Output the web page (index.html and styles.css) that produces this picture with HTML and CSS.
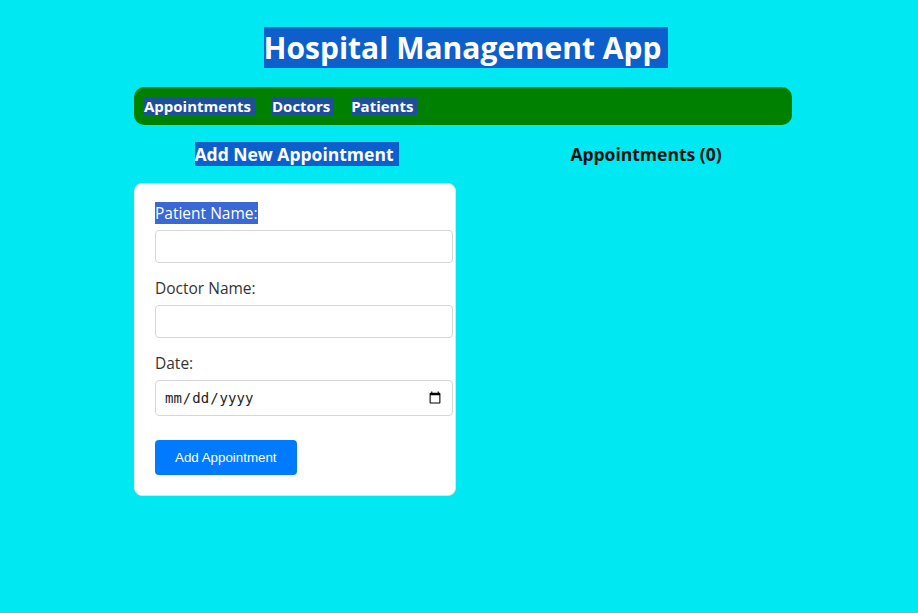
FILE: index.html
```html
<!DOCTYPE html>
<html>
<head>
<meta charset="utf-8">
<title>Hospital Management App</title>
<link rel="stylesheet" href="styles.css">
</head>
<body>
<div class="app">
  <h1 class="title"><span class="sel sel-title">Hospital Management App</span></h1>
  <nav class="nav">
    <a class="nav-link" href="#">Appointments</a>
    <a class="nav-link" href="#">Doctors</a>
    <a class="nav-link" href="#">Patients</a>
  </nav>
  <div class="columns">
    <section class="col">
      <h2 class="sub sub-left"><span class="sel sel-sub">Add New Appointment</span></h2>
      <form class="card">
        <div class="group">
          <label class="label"><span class="sel-light">Patient Name:</span></label>
          <input class="field" type="text">
        </div>
        <div class="group">
          <label class="label">Doctor Name:</label>
          <input class="field" type="text">
        </div>
        <div class="group">
          <label class="label">Date:</label>
          <input class="field date" type="date">
        </div>
        <button class="btn" type="button">Add Appointment</button>
      </form>
    </section>
    <section class="col">
      <h2 class="sub dark">Appointments (0)</h2>
    </section>
  </div>
</div>
</body>
</html>
```

FILE: styles.css
```css
html, body {
  background: #00e8f2;
}
body {
  margin: 0 0 0 8px;
  font-family: "Open Sans", "Noto Sans", sans-serif;
  color: #222;
}
.app {
  width: 658px;
  margin: 0 auto;
  padding-top: 30px;
}
.title {
  margin: 0 0 22px;
  padding-left: 6px;
  text-align: center;
  font-size: 30px;
  line-height: 35px;
  font-weight: 700;
  color: #fff;
}
.sel {
  background: #0d5fcb;
  color: #fff;
}
.sel-title {
  padding-right: 7px;
}
.sel-sub {
  padding-right: 6px;
}
.nav {
  background: #008000;
  border-radius: 10px;
  height: 38px;
  display: flex;
  align-items: center;
  padding-left: 10px;
  gap: 17px;
}
.nav-link {
  color: #fff;
  text-decoration: none;
  font-weight: 700;
  font-size: 15px;
  line-height: 18px;
  background: #1d4f9b;
  padding-right: 4px;
}
.columns {
  display: grid;
  grid-template-columns: 322px 1fr;
  column-gap: 44px;
  margin-top: 19px;
}
.sub {
  margin: 0 0 18px;
  text-align: center;
  font-size: 17.5px;
  line-height: 21px;
  font-weight: 700;
  color: #fff;
}
.sub-left {
  padding-left: 4px;
}
.sub.dark {
  color: #111;
}
.card {
  background: #fff;
  border: 1px solid #e2e2e2;
  border-radius: 8px;
  padding: 20px;
}
.group {
  margin-bottom: 16px;
}
.label {
  display: block;
  font-size: 15.5px;
  line-height: 18px;
  margin-bottom: 8px;
  color: #333;
}
.sel-light {
  background: #3a68d4;
  color: #fff;
}
.field {
  width: 100%;
  padding: 8px;
  border: 1px solid #d6d6d6;
  border-radius: 4px;
  font-size: 13.33px;
  line-height: 15px;
  height: 15px;
  font-family: "Liberation Sans", sans-serif;
  background: #fff;
}
.field.date {
  height: 18px;
  font-family: "DejaVu Sans Mono", monospace;
  font-size: 14px;
  color: #222;
}
.btn {
  margin-top: 8px;
  background: #007bff;
  color: #fff;
  border: 0;
  border-radius: 4px;
  padding: 10px 20px;
  font-family: "Liberation Sans", sans-serif;
  font-size: 13.33px;
  line-height: 15px;
}
```
